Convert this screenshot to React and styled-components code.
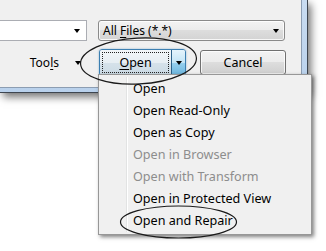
import React from "react";
import styled, { createGlobalStyle } from "styled-components";

const Global = createGlobalStyle`
  html, body { margin: 0; padding: 0; background: #ffffff; }
  body { font-family: "Noto Sans", "Open Sans", "DejaVu Sans", sans-serif; font-size: 12px; color: #000; }
`;

const Page = styled.div`
  position: relative;
  width: 326px;
  height: 251px;
  overflow: hidden;
  background: #fff;
`;

const Window = styled.div`
  box-sizing: border-box;
  width: 308px;
  padding: 0 5px 4px 0;
  background: linear-gradient(180deg, #c9dcf1 0%, #b9d1ec 100%);
  border-right: 1px solid #3e4650;
  border-bottom: 1px solid #3e4650;
  box-shadow: 3px 4px 8px rgba(0, 0, 0, 0.55);
`;

const Client = styled.div`
  box-sizing: border-box;
  height: 88px;
  padding-top: 20px;
  background: #f0f0f0;
  border-right: 1px solid #8c9db2;
  border-bottom: 1px solid #8c9db2;
`;

const Row = styled.div`
  display: flex;
  align-items: center;
  margin-top: ${(p) => p.$top || 0}px;
`;

const Arrow = styled.span`
  width: 0;
  height: 0;
  border-left: 3.5px solid transparent;
  border-right: 3.5px solid transparent;
  border-top: 4px solid #000;
  flex: none;
`;

const FileBox = styled.div`
  box-sizing: border-box;
  width: 87px;
  height: 21px;
  background: #fff;
  border: 1px solid #abadb3;
  border-left: none;
  display: flex;
  align-items: center;
  justify-content: flex-end;
  padding-right: 6px;
`;

const Combo = styled.div`
  box-sizing: border-box;
  margin-left: 11px;
  width: 187px;
  height: 21px;
  border: 1px solid #8a8a8a;
  border-radius: 3px;
  background: linear-gradient(180deg, #f3f3f3 0%, #ebebeb 50%, #dddddd 50%, #d3d3d3 100%);
  box-shadow: inset 0 0 0 1px rgba(255, 255, 255, 0.8);
  display: flex;
  align-items: center;
  justify-content: space-between;
  padding: 0 5px 0 4px;
  white-space: nowrap;
`;

const Key = styled.span`
  text-decoration: underline;
  text-underline-offset: 2px;
`;

const ToolsGroup = styled.div`
  box-sizing: border-box;
  width: 99px;
  display: flex;
  align-items: center;
  justify-content: flex-end;
  gap: 16px;
  padding-right: 18px;
`;

const Split = styled.div`
  display: flex;
  height: 25px;
  border: 1px solid #3c7fb1;
  border-radius: 3px;
  box-shadow: 0 0 2px rgba(60, 127, 177, 0.6);
  overflow: hidden;
`;

const SplitMain = styled.div`
  box-sizing: border-box;
  width: 71px;
  display: flex;
  align-items: center;
  justify-content: center;
  background: linear-gradient(180deg, #f2f6f9 0%, #e7eef3 50%, #d6e2ea 50%, #cbdae4 100%);
  position: relative;
  font-size: 12.5px;
  &::after {
    content: "";
    position: absolute;
    inset: 2px;
    border: 1px dotted #222;
  }
`;

const SplitDrop = styled.div`
  box-sizing: border-box;
  width: 14px;
  display: flex;
  align-items: center;
  justify-content: center;
  border-left: 1px solid #2c628b;
  background: linear-gradient(180deg, #e5f4fc 0%, #c4e5f6 50%, #98d1ef 50%, #6cb5dd 100%);
`;

const Button = styled.div`
  box-sizing: border-box;
  margin-left: 14px;
  width: 86px;
  height: 25px;
  border: 1px solid #707070;
  border-radius: 3px;
  background: linear-gradient(180deg, #f2f2f2 0%, #ebebeb 50%, #dddddd 50%, #cfcfcf 100%);
  box-shadow: inset 0 0 0 1px rgba(255, 255, 255, 0.75);
  display: flex;
  align-items: center;
  justify-content: center;
  font-size: 12.5px;
`;

const Menu = styled.div`
  position: absolute;
  left: 98px;
  top: 74px;
  box-sizing: border-box;
  width: 214px;
  height: 161px;
  padding: 2px;
  background: #f0f0f0;
  border: 1px solid #979797;
  box-shadow: 2px 2px 4px rgba(0, 0, 0, 0.5);
  &::before {
    content: "";
    position: absolute;
    top: 2px;
    bottom: 2px;
    left: 27px;
    width: 1px;
    background: #e2e3e3;
    box-shadow: 1px 0 0 #ffffff;
  }
`;

const Item = styled.div`
  height: 22px;
  display: flex;
  align-items: center;
  padding-left: 32px;
  font-size: 12.6px;
  color: ${(p) => (p.$disabled ? "#8d8d8d" : "#000")};
  white-space: nowrap;
`;

const Marks = styled.svg`
  position: absolute;
  left: 0;
  top: 0;
  pointer-events: none;
`;

const items = [
  { label: "Open" },
  { label: "Open Read-Only" },
  { label: "Open as Copy" },
  { label: "Open in Browser", disabled: true },
  { label: "Open with Transform", disabled: true },
  { label: "Open in Protected View" },
  { label: "Open and Repair" },
];

export default function App() {
  return (
    <Page>
      <Global />
      <Window>
        <Client>
          <Row>
            <FileBox>
              <Arrow />
            </FileBox>
            <Combo>
              <span>
                All <Key>F</Key>iles (*.*)
              </span>
              <Arrow />
            </Combo>
          </Row>
          <Row $top={8}>
            <ToolsGroup>
              <span>
                Too<Key>l</Key>s
              </span>
              <Arrow />
            </ToolsGroup>
            <Split>
              <SplitMain>
                <span>
                  <Key>O</Key>pen
                </span>
              </SplitMain>
              <SplitDrop>
                <Arrow />
              </SplitDrop>
            </Split>
            <Button>Cancel</Button>
          </Row>
        </Client>
      </Window>
      <Menu>
        {items.map((it) => (
          <Item key={it.label} $disabled={it.disabled}>
            {it.label}
          </Item>
        ))}
      </Menu>
      <Marks width="326" height="251" viewBox="0 0 326 251">
        <ellipse cx="138.5" cy="61" rx="58" ry="23" fill="none" stroke="#1a1a1a" strokeWidth="1.2" transform="rotate(-3 138.5 61)" />
        <ellipse cx="178.5" cy="222" rx="58" ry="16" fill="none" stroke="#1a1a1a" strokeWidth="1.2" />
      </Marks>
    </Page>
  );
}
